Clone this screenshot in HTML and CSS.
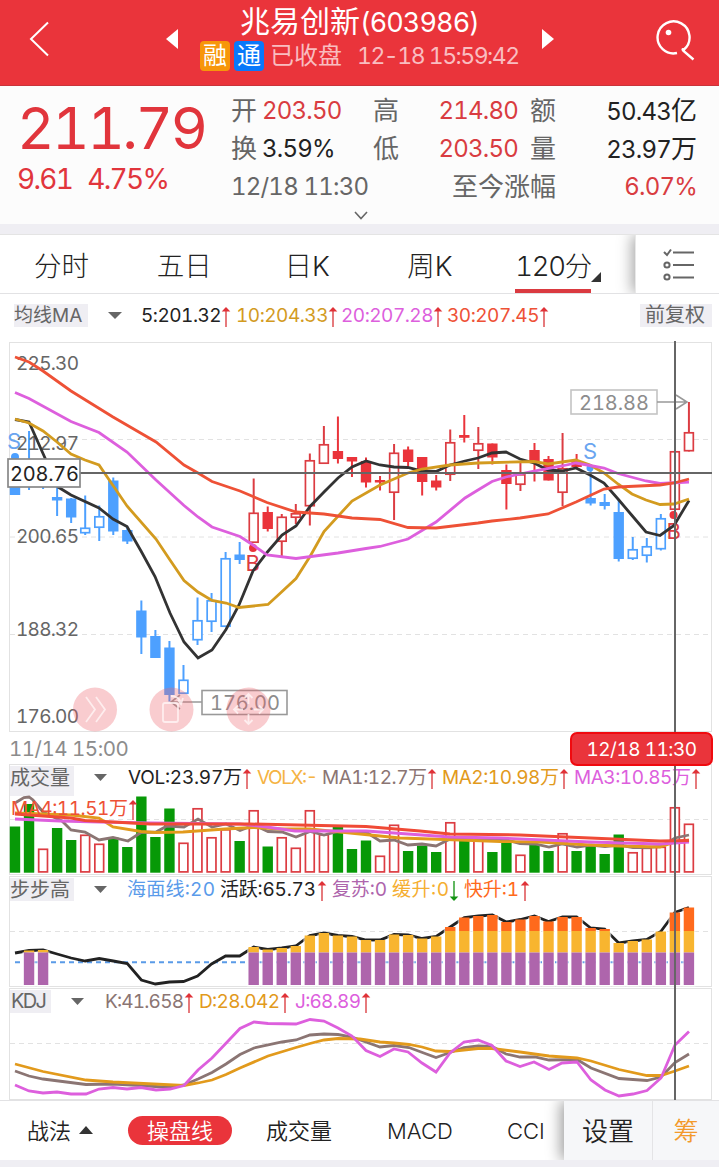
FILE: index.html
```html
<!DOCTYPE html>
<html lang="zh-CN">

<head>
    <meta charset="UTF-8">
    <meta name="viewport" content="width=device-width, initial-scale=1.0">
    <title>兆易创新(603986)</title>
    <link rel="stylesheet" href="styles.css">
</head>

<body>
    <svg class="defs" width="0" height="0">
        <symbol id="up" viewBox="0 0 10 20">
            <path d="M5 1V20" stroke="#e0595c" stroke-width="1.6" />
            <path d="M5 0L9.3 4.6H0.7Z" fill="#e03238" />
        </symbol>
        <symbol id="down" viewBox="0 0 10 20">
            <path d="M5 0V19" stroke="#3aa53a" stroke-width="1.6" />
            <path d="M5 20L9.3 15.4H0.7Z" fill="#129312" />
        </symbol>
    </svg>

    <!-- Header -->
    <header class="topbar">
        <svg class="back" width="60" height="78" viewBox="0 0 60 78"><path d="M48 22.500L31 39L48 55.500" /></svg>
        <svg class="prev" width="12" height="20" viewBox="0 0 12 20"><path d="M12 0V20L0 10Z" /></svg>
        <div class="stock">
            <div class="stock-name">兆易创新<span>(603986)</span></div>
            <div class="stock-info">
                <b class="tag tag-rong">融</b><b class="tag tag-tong">通</b>
                <span class="closed">已收盘</span><span class="time">12-18 15:59:42</span>
            </div>
        </div>
        <svg class="next" width="12" height="20" viewBox="0 0 12 20"><path d="M0 0V20L12 10Z" /></svg>
        <svg class="search" width="42" height="42" viewBox="0 0 42 42">
            <path d="M22 34A16 16 0 1 1 29 30.500Q26.500 29.500 28.500 32L38.500 40.500" />
            <circle cx="13.500" cy="13.500" r="2.800" />
        </svg>
    </header>

    <!-- Quote -->
    <section class="quote">
        <div class="price-box">
            <div class="price">211.79</div>
            <div class="change"><span>9.61</span><span>4.75%</span></div>
        </div>
        <div class="stats">
            <div class="stat-row">
                <i>开</i><span class="red">203.50</span><i>高</i><span class="red end">214.80</span><i class="last">额</i><span class="end">50.43<em>亿</em></span>
            </div>
            <div class="stat-row">
                <i>换</i><span>3.59%</span><i>低</i><span class="red end">203.50</span><i class="last">量</i><span class="end">23.97<em>万</em></span>
            </div>
            <div class="stat-range">
                <span class="when">12/18 11:30</span><i>至今涨幅</i><span class="red end">6.07%</span>
            </div>
        </div>
        <svg class="more" width="14" height="9" viewBox="0 0 14 9"><path d="M1 1L7 7.500L13 1" /></svg>
    </section>

    <!-- Period tabs -->
    <nav class="tabs">
        <div class="tab">分时</div>
        <div class="tab">五日</div>
        <div class="tab">日K</div>
        <div class="tab">周K</div>
        <div class="tab active"><span>120分</span></div>
        <div class="tab-menu">
            <svg width="34" height="34" viewBox="0 0 34 34">
                <path d="M2 4L5 7L9 1.500M11 4.500H32M11 17H32M11 29.500H32" />
                <circle cx="5" cy="17" r="2.600" /><circle cx="5" cy="29" r="2.600" />
            </svg>
        </div>
    </nav>

    <main class="charts">
        <div class="ma-row">
            <span class="chip">均线MA</span>
            <svg class="caret" width="14" height="7" viewBox="0 0 14 7"><path d="M0 0H14L7 7Z" /></svg>
            <span class="ma c5">5:201.32<svg><use href="#up" /></svg></span>
            <span class="ma c10">10:204.33<svg><use href="#up" /></svg></span>
            <span class="ma c20">20:207.28<svg><use href="#up" /></svg></span>
            <span class="ma c30">30:207.45<svg><use href="#up" /></svg></span>
            <span class="chip fq">前复权</span>
        </div>

        <!-- K line -->
        <svg class="panel" width="719" height="390" viewBox="0 342 719 390">
            <rect class="frame" x="9.500" y="342.500" width="702" height="389" />
            <path class="grid" d="M10 439.500H711M10 537H711M10 634.500H711" />
            <g id="candles"></g>
            <g class="axis">
                <text x="16" y="370" textLength="63">225.30</text>
                <text x="16" y="450" textLength="63">212.97</text>
                <text x="16" y="543" textLength="63">200.65</text>
                <text x="16" y="636" textLength="63">188.32</text>
                <text x="16" y="723" textLength="63">176.00</text>
            </g>
            <circle cx="15" cy="457" r="4" fill="#4da0ff" />
            <text class="sign sell" x="7" y="449">S</text>
            <circle cx="590" cy="468" r="3.500" fill="#4da0ff" />
            <text class="sign sell" x="583" y="459">S</text>
            <circle cx="253" cy="548" r="4" fill="#ea343b" />
            <text class="sign buy" x="245.500" y="571">B</text>
            <circle cx="673.500" cy="515" r="4" fill="#ea343b" />
            <text class="sign buy" x="666.500" y="538.500">B</text>
            <g id="ma"></g>
            <path d="M80 473H712" stroke="#666" stroke-width="2" />
            <rect x="8" y="459" width="72" height="28" fill="#fff" stroke="#888" stroke-width="1.700" />
            <text class="cursor-price" x="10" y="481" textLength="69">208.76</text>
            <g class="mark">
                <rect x="571" y="390" width="86" height="24" stroke="#c4c4c4" />
                <path d="M657 402H686M676 395L687 402L676 409" />
                <text x="579" y="410" textLength="70">218.88</text>
                <rect x="202" y="690.500" width="85" height="24" stroke="#999" />
                <path d="M202 702H171M180 695L171 702L180 709" />
                <text x="210" y="710" textLength="70">176.00</text>
            </g>
            <g class="round">
                <circle cx="95" cy="709.500" r="22" />
                <path d="M86 697L95 709.500L86 722M96 697L105 709.500L96 722" />
                <circle cx="171.500" cy="709.500" r="22" />
                <rect x="163" y="703" width="15" height="19" rx="2" />
                <path d="M171 696Q179 696 181 703M178 700L181 704L183 698" />
                <circle cx="248.500" cy="709.500" r="22" />
                <path d="M248.500 694V704M248.500 714V724M234 709.500H243M254 709.500H263M244.500 698L248.500 694L252.500 698M244.500 720L248.500 724L252.500 720M238 705.500L234 709.500L238 713.500M259 705.500L263 709.500L259 713.500" />
            </g>
        </svg>

        <div class="dates">
            <span>11/14 15:00</span>
            <span class="date-pill">12/18 11:30</span>
        </div>

        <!-- Volume -->
        <svg class="panel" width="719" height="112" viewBox="0 764 719 112">
            <rect class="frame" x="9.500" y="764.500" width="702" height="110" />
            <path class="grid" d="M10 819.500H711" />
            <rect class="chip-bg" x="10" y="766" width="64" height="30" />
            <text class="name" x="10" y="785" textLength="60">成交量</text>
            <path class="drop" d="M94 774H107L100.500 781Z" />
            <g id="volume"></g>
            <g id="volume-ma"></g>
            <g class="legend">
                <text x="128" y="784" textLength="114" fill="#222">VOL:23.97万</text>
                <use href="#up" x="242" y="769" width="10" height="20" />
                <text x="257" y="784" textLength="61" fill="#f5b343">VOLX:-</text>
                <text x="322" y="784" textLength="105" fill="#8b7573">MA1:12.7万</text>
                <use href="#up" x="427" y="769" width="10" height="20" />
                <text x="442" y="784" textLength="117" fill="#e29a1c">MA2:10.98万</text>
                <use href="#up" x="559" y="769" width="10" height="20" />
                <text x="574" y="784" textLength="117" fill="#dd5fdd">MA3:10.85万</text>
                <use href="#up" x="691" y="769" width="10" height="20" />
                <text x="11" y="815" textLength="117" fill="#ee5136">MA4:11.51万</text>
                <use href="#up" x="128" y="800" width="10" height="20" />
            </g>
        </svg>

        <!-- BBG -->
        <svg class="panel" width="719" height="112" viewBox="0 876 719 112">
            <rect class="frame" x="9.500" y="876.500" width="702" height="110" />
            <path class="grid" d="M10 931.500H711" />
            <rect class="chip-bg" x="10" y="878" width="64" height="23" />
            <text class="name" x="10" y="897" textLength="60">步步高</text>
            <path class="drop" d="M94 886H107L100.500 893Z" />
            <path d="M15 962.300H689" stroke="#5a9be8" stroke-width="2" stroke-dasharray="5 4" />
            <g id="bbg"></g>
            <g class="legend">
                <text x="127" y="896" textLength="88" fill="#5a9bea">海面线:20</text>
                <text x="220" y="896" textLength="96" fill="#222">活跃:65.73</text>
                <use href="#up" x="317" y="881" width="10" height="20" />
                <text x="332" y="896" textLength="55" fill="#ae65ac">复苏:0</text>
                <text x="392" y="896" textLength="57" fill="#f5ae30">缓升:0</text>
                <use href="#down" x="449" y="881" width="10" height="20" />
                <text x="464" y="896" textLength="55" fill="#ff6a1c">快升:1</text>
                <use href="#up" x="520" y="881" width="10" height="20" />
            </g>
        </svg>

        <!-- KDJ -->
        <svg class="panel" width="719" height="112" viewBox="0 988 719 112">
            <rect class="frame" x="9.500" y="988.500" width="702" height="111" />
            <path class="grid" d="M10 1043.500H711" />
            <rect class="chip-bg" x="10" y="990" width="41" height="23" />
            <text class="name" x="11" y="1008" textLength="36">KDJ</text>
            <path class="drop" d="M71 998H84L77.500 1005Z" />
            <g id="kdj"></g>
            <g class="legend">
                <text x="105" y="1008" textLength="79" fill="#8b7573">K:41.658</text>
                <use href="#up" x="184" y="993" width="10" height="20" />
                <text x="199" y="1008" textLength="81" fill="#e29a1c">D:28.042</text>
                <use href="#up" x="280" y="993" width="10" height="20" />
                <text x="295" y="1008" textLength="66" fill="#dd5fdd">J:68.89</text>
                <use href="#up" x="361" y="993" width="10" height="20" />
            </g>
        </svg>
        <div class="crosshair"></div>
    </main>

    <!-- Bottom bar -->
    <footer class="bottom">
        <div class="strategy">战法<svg width="14" height="8" viewBox="0 0 14 8"><path d="M0 8H14L7 0Z" /></svg></div>
        <div class="pill">操盘线</div>
        <div class="ind vol">成交量</div>
        <div class="ind macd">MACD</div>
        <div class="ind cci">CCI</div>
        <div class="setting">设置</div>
        <div class="chou">筹</div>
    </footer>
    <script src="chart.js"></script>
</body>

</html>
```
FILE: styles.css
```css
body {
    margin: 0;
    width: 719px;
    height: 1167px;
    overflow: hidden;
    background-color: #efeef3;
    font-family: Inter, "Noto Sans CJK SC", sans-serif;
    font-variant-numeric: tabular-nums;
    color: #222;
}

svg {
    display: block;
    flex: none;
}

.defs {
    position: absolute;
}

i,
em {
    font-style: normal;
}

/* Header */

.topbar {
    display: flex;
    box-sizing: border-box;
    height: 86px;
    background-color: #ea343b;
    border-bottom: 1px solid #c9343b;
    color: #fff;
}

.back {
    fill: none;
    stroke: #fff;
    stroke-width: 2;
}

.prev {
    margin: 29px 0 0 106px;
    fill: #fff;
}

.next {
    margin-top: 29px;
    fill: #fff;
}

.stock {
    width: 364px;
}

.stock-name {
    height: 42px;
    padding-left: 62px;
    font-size: 30px;
    line-height: 43px;
    white-space: nowrap;
}

.stock-name span {
    font-size: 27px;
    letter-spacing: -0.9px;
}

.stock-info {
    display: flex;
    height: 30px;
    margin-top: -1px;
    padding-left: 22px;
    line-height: 30px;
    font-size: 24px;
    white-space: nowrap;
}

.tag {
    width: 30px;
    height: 30px;
    margin-right: 4px;
    border-radius: 4px;
    font-size: 24px;
    font-weight: 400;
    text-align: center;
}

.tag-rong {
    background-color: #f7960a;
}

.tag-tong {
    background-color: #0a78fa;
}

.closed {
    margin: 0 15px 0 2px;
    color: #f9bdc0;
}

.time {
    font-size: 23px;
    letter-spacing: -1.5px;
    color: #f9bdc0;
}

.search {
    margin: 19px 0 0 101px;
    fill: none;
    stroke: #fff;
    stroke-width: 2.4;
}

.search circle {
    fill: #fff;
    stroke: none;
}

/* Quote */

.quote {
    position: relative;
    display: flex;
    height: 138px;
    background-color: #fcfcfc;
}

.price-box {
    width: 214px;
    padding-left: 17px;
    color: #e1353c;
}

.price {
    height: 76px;
    line-height: 84px;
    font-size: 58px;
    letter-spacing: -2.5px;
}

.change {
    display: flex;
    gap: 15px;
    line-height: 34px;
    font-size: 28px;
    letter-spacing: -1.7px;
}

.stats {
    width: 466px;
    padding-top: 6px;
    font-size: 24px;
    line-height: 38px;
    letter-spacing: -0.8px;
    white-space: nowrap;
}

.stat-row {
    display: grid;
    grid-template-columns: 31px 111px 40px 105px 38px 141px;
    height: 38px;
}

.stats i {
    font-size: 26px;
    letter-spacing: 0;
    color: #666;
}

.stats em {
    font-size: 26px;
    letter-spacing: 0;
}

.stats .last {
    padding-left: 12px;
}

.stat-range {
    display: flex;
    height: 38px;
}

.when {
    width: 221px;
    color: #666;
}

.end {
    flex: 1;
    text-align: right;
}

.red {
    color: #d93c41;
}

.more {
    position: absolute;
    left: 354px;
    top: 125px;
    fill: none;
    stroke: #666;
    stroke-width: 1.6;
}

/* Tabs */

.tabs {
    display: flex;
    box-sizing: border-box;
    height: 60px;
    margin-top: 10px;
    border-top: 1px solid #e4e4e4;
    border-bottom: 1px solid #e2e2e4;
    background-color: #fff;
    overflow: hidden;
    font-size: 27.5px;
    font-weight: 300;
    line-height: 62px;
}

.tab {
    width: 123px;
    text-align: center;
}

.active {
    position: relative;
    width: 144px;
    padding-left: 24px;
    box-sizing: border-box;
    text-align: left;
}

.active span {
    display: block;
    box-sizing: border-box;
    width: 76px;
    height: 58px;
    border-bottom: 4px solid #da3a40;
    white-space: nowrap;
    letter-spacing: -1.3px;
}

.active::after {
    content: "";
    position: absolute;
    left: 100px;
    top: 37px;
    border-left: 10px solid transparent;
    border-bottom: 10px solid #333;
}

.tab-menu {
    width: 83px;
    border-left: 1px solid #e8e8e8;
    background-color: #fff;
    box-shadow: -3px 0 14px rgba(0, 0, 0, 0.35);
}

.tab-menu svg {
    margin: 13px 0 0 26px;
    fill: none;
    stroke: #666;
    stroke-width: 2;
}

/* Charts */

.charts {
    position: relative;
    height: 806px;
    background-color: #fff;
}

.ma-row {
    display: flex;
    height: 48px;
    box-sizing: border-box;
    padding-top: 10px;
    font-size: 19px;
    line-height: 23px;
    white-space: nowrap;
}

.chip {
    box-sizing: border-box;
    width: 74px;
    height: 23px;
    margin-left: 14px;
    background-color: #efeef3;
    color: #666;
}

.chip.fq {
    width: 72px;
    margin-left: 87px;
    padding-left: 5px;
    font-size: 20px;
}

.caret {
    margin: 8px 0 0 20px;
    fill: #666;
}

.ma {
    display: flex;
    width: 106px;
    letter-spacing: -0.5px;
}

.ma svg {
    width: 10px;
    height: 20px;
    margin-top: 3px;
}

.c5 {
    width: 95px;
    margin-left: 19px;
}

.c10 {
    width: 105px;
    color: #d39b1f;
}

.c20 {
    color: #dd5fdd;
}

.c30 {
    color: #ee5136;
}

.frame {
    fill: none;
    stroke: #e2e2e2;
}

.grid {
    stroke: #e2e2e2;
    stroke-dasharray: 5 4;
}

.axis {
    font-size: 19px;
    fill: #666;
}

.sell {
    fill: #6aa5f0;
    font-size: 22px;
}

.buy {
    fill: #dc3c42;
    font-size: 22px;
}

.cursor-price {
    font-size: 20px;
    fill: #222;
}

.mark {
    fill: none;
    stroke: #999;
    stroke-width: 1.6;
}

.mark text {
    fill: #8c8c8c;
    stroke: none;
    font-size: 20px;
}

.round circle {
    fill: rgba(237, 100, 108, 0.33);
}

.round path,
.round rect {
    fill: none;
    stroke: rgba(255, 245, 245, 0.8);
    stroke-width: 1.8;
}

.dates {
    display: flex;
    justify-content: space-between;
    height: 32px;
    padding-left: 9px;
    padding-right: 6px;
    font-size: 20.5px;
    line-height: 34px;
    letter-spacing: -0.5px;
    color: #8c8c8c;
}

.date-pill {
    position: relative;
    z-index: 2;
    box-sizing: border-box;
    width: 143px;
    height: 34px;
    border: 2px solid #f00a0f;
    border-radius: 7px;
    background-color: #ea343b;
    line-height: 31px;
    text-align: center;
    font-size: 19px;
    color: #fff;
}

.chip-bg {
    fill: #efeef3;
}

.name {
    font-size: 20px;
    fill: #666;
}

.drop {
    fill: #666;
}

.legend {
    font-size: 19px;
}

.crosshair {
    position: absolute;
    left: 674px;
    top: 47px;
    width: 2px;
    height: 759px;
    background-color: #666;
}

/* Bottom bar */

.bottom {
    display: flex;
    box-sizing: border-box;
    height: 60px;
    border-top: 1px solid #e2e2e4;
    background-color: #fff;
    overflow: hidden;
    font-size: 22px;
    font-weight: 350;
    line-height: 61px;
    white-space: nowrap;
}

.strategy {
    display: flex;
    width: 101px;
    padding-left: 27px;
}

.strategy svg {
    margin: 25px 0 0 8px;
    fill: #333;
}

.pill {
    width: 104px;
    height: 29px;
    margin-top: 15px;
    border-radius: 15px;
    background-color: #ea343b;
    line-height: 30px;
    text-align: center;
    color: #fff;
}

.vol {
    width: 121px;
    padding-left: 34px;
}

.macd {
    width: 120px;
}

.cci {
    width: 38px;
    margin-right: 19px;
}

.setting {
    width: 88px;
    background-color: #f6f7f9;
    box-shadow: -3px 0 14px rgba(0, 0, 0, 0.4);
    text-align: center;
    font-size: 26px;
}

.chou {
    flex: 1;
    border-left: 1px solid #e4e4e6;
    background-color: #f6f7f9;
    text-align: center;
    font-size: 25px;
    color: #f39a2b;
}
```
FILE: chart.js
```js
const NS = 'http://www.w3.org/2000/svg';
const STEP = 14.04;
const BAR = 10.4;
const RED = '#dc3c42';
const BLUE = '#4da0ff';

function add(parent, tag, attrs) {
    const el = document.createElementNS(NS, tag);
    for (const key in attrs) el.setAttribute(key, attrs[key]);
    document.getElementById(parent).appendChild(el);
}

function line(parent, points, color, width) {
    add(parent, 'polyline', {
        points: points,
        fill: 'none',
        stroke: color,
        'stroke-width': width || 2.8
    });
}

function centre(i) {
    return 15 + i * STEP;
}

function bar(parent, i, top, bottom, color, hollow) {
    const inset = hollow ? 0.8 : 0;
    add(parent, 'rect', {
        x: centre(i) - BAR / 2 + inset,
        y: top + inset,
        width: BAR - inset * 2,
        height: bottom - top - inset * 2,
        fill: hollow ? '#fff' : color,
        stroke: hollow ? color : 'none',
        'stroke-width': 1.7
    });
}

// high, body top, body bottom, low, 1 = hollow
const candles = [
    [460, 470, 495, 495, 0], [431, 468, 480, 490, 0], [462, 475, 482, 489, 0], [486, 497, 500.5, 516, 0],
    [498, 498.5, 517.5, 523, 0], [495.5, 527.5, 533.5, 535, 1], [505.5, 516, 528, 541, 1], [477.5, 480.5, 531.5, 535, 0],
    [526.5, 530, 541.5, 544, 0], [600.5, 610.5, 637.5, 654, 0], [630, 636, 658, 658, 0], [641, 647.5, 695, 701.5, 0],
    [665, 679.5, 694, 694, 1], [597.5, 620, 640.5, 645, 1], [593, 600, 622, 632, 1], [552, 558, 627, 627, 1],
    [542, 554.5, 560, 564, 0], [478.5, 512.5, 543, 543, 1], [506.5, 512, 529, 531.5, 0], [514, 516.5, 542, 556.5, 1],
    [504, 513, 518, 524, 1], [453.5, 460, 506.5, 525.5, 1], [426, 444, 464, 464, 1], [416.5, 451, 459, 463.5, 0],
    [457, 457, 461.5, 477, 0], [457.5, 461, 482.5, 487.5, 0], [476, 480, 482.5, 490.5, 0], [444, 452.5, 493, 520, 1],
    [446.5, 449.5, 462, 466, 0], [457, 457, 482, 495.5, 0], [475, 480.5, 487.5, 490.5, 0], [429.5, 442, 475, 481, 1],
    [415, 435, 437.8, 442.5, 0], [427, 443, 451, 469, 1], [443.5, 443.5, 457.5, 464.5, 0], [464.5, 470, 484, 509.5, 0],
    [461.5, 474, 485, 491, 1], [443, 450, 461, 481.5, 0], [456, 459, 480.5, 480.5, 0], [433, 468, 493, 506, 1],
    [454, 461, 467, 469, 0], [470, 498, 503.5, 505.5, 0], [494, 502, 506, 509.5, 0], [500, 512, 559, 561.5, 0],
    [537, 549, 559, 560, 1], [538, 546, 556, 562.5, 1], [514, 518, 549.5, 550.5, 1], [451, 451, 510, 510, 1],
    [402, 432, 451.5, 451.5, 1]
];

candles.forEach(function (c, i) {
    const color = i < 17 || (i > 40 && i < 47) ? BLUE : (c[4] ? RED : '#ea343b');
    add('candles', 'path', {
        d: `M${centre(i)} ${c[0]}V${c[3]}`,
        stroke: color,
        'stroke-width': 2
    });
    bar('candles', i, c[1], c[2], color, c[4]);
});

line('ma', '15,419.500 29,422 45,458 58,487 71,495 99,508 113,519 127,526.500 141,551 155,576.500 170,613 184,642 198,658 212,650 226,629.500 239,605 253,571 267,552.500 282,535 296,526 310,506.500 324,492 338,478 352,467 366,461 380,465 394,467 408,467.500 422,471 436,471.500 450,465 465,461 478,458 492,453 506,452 520,459 534,463 548,470 562,471 576,468 590,475 604,483 618,499 632,515.500 646,532 660,535.500 674,525.500 689,500.500', '#333');
line('ma', '15,419 29,423 43,431 57,442 71,454 85,460 99,465 113,485.500 127,506 156,539 170,560 184,580.500 198,592 212,600.500 226,603 239,607.500 268,604.500 281,592.500 296,578.500 310,556.500 324,531.500 352,501 380,485 408,473 422,469 450,465 478,463 534,461.500 548,464 576,460 590,465 604,473 618,484 632,494 646,500 660,504.500 674,504 689,499', '#d39b1f');
line('ma', '15,392.500 29,398.500 71,421.500 99,432.500 127,452 156,480 184,505.500 198,517 212,527 240,536.500 253,545 267,555 296,558.500 338,553 366,548.500 380,546.500 408,539 436,522 465,498 478,490 492,481.500 506,477 534,471 562,466 576,463 590,465.500 604,468 618,473.500 646,481 660,483.500 689,482', '#dd5fdd');
line('ma', '15,357 29,362 43,371 71,391 113,417 156,442 184,465 198,473 212,481.500 240,491 267,502.500 296,512 324,514 352,518 380,519.500 408,527.500 436,528 478,523 492,521 520,518 548,514 576,502 604,489 618,487 660,485 674,483 689,479', '#ee5136');

// top of each volume bar, r = up, g = down
const volume = [
    '826.5g', '804g', '848.5r', '828g', '840g', '834.5r', '843.5r', '837.5g', '847g', '796.5g', '837g', '808.5g', '842.5r',
    '808r', '837r', '829r', '841g', '810r', '846.5g', '837r', '847.5r', '810r', '834r', '827g', '849g', '840.5g', '855.5r',
    '824.5r', '851g', '845.5g', '852g', '822r', '836.5g', '839r', '852g', '843g', '854.5r', '845g', '851g', '833r',
    '851g', '845.5g', '854g', '834.5g', '852r', '847.5r', '846.5r', '807r', '823.5r'
];

volume.forEach(function (v, i) {
    const up = v.endsWith('r');
    bar('volume', i, parseFloat(v), 872.7, up ? RED : '#079907', up);
});

line('volume-ma', '15,803 24,797.500 29,797 33,800 43,812 62,821 71,830 85,832 99,840 113,837.500 128,841 141,832.500 156,832 167,826 184,827 198,819 212,827 226,824 240,830.500 254,825 268,831.500 282,832 296,837 310,831.500 324,835 338,831.500 366,832 380,841 394,840 408,845 422,844 436,846 450,839 464,838 478,839 507,840 520,843.500 535,844 549,847 562,844 577,847 591,845 605,846.500 619,845 633,847.500 647,847.500 661,846.500 675,838 689,835', '#8b7573');
line('volume-ma', '15,813 43,814 71,815 99,818 113,827 141,831.500 155,832.500 183,832 225,829 253,827.500 281,829 310,829 360,834 400,838 460,840 500,841.500 540,842 590,845 620,846 660,847 675,842 689,840', '#e29a1c');
line('volume-ma', '15,819 60,821 100,822 150,823 240,824 267,827 295,831 366,831 450,837 500,838 590,842 660,844 689,842', '#dd5fdd');
line('volume-ma', '15,814 71,818 85,820.500 113,822 150,824 250,824 366,826.500 420,831 450,834 520,835 590,838 660,841 689,840.500', '#f04a36', 3);

// activity line, bars are shown where it is strong
const active = [
    953, 950.5, 950, 954, 958, 961, 958.5, 961, 963.5, 980, 984, 982, 981.5, 976, 964, 956, 956,
    947, 949.5, 948, 946, 935.5, 933, 935.5, 936.5, 940, 940, 934.5, 935, 938.5, 936.5, 927, 917.5,
    916, 915, 922, 919.5, 916, 921.5, 917, 917, 928, 929, 943, 941, 939.5, 931.5, 912.5, 907.5
];

line('bbg', active.map((y, i) => `${centre(i)},${y}`).join(' '), '#222');
active.forEach(function (y, i) {
    if (i === 0 || (i > 2 && i < 17)) return;
    add('bbg', 'rect', { x: centre(i) - 6.5, y: y + 1.5, width: 13, height: 985 - y, fill: '#fff', opacity: 0.6 });
    if (y < 931) bar('bbg', i, y, 931, '#ff6a1c');
    bar('bbg', i, Math.max(y, 931), 952.5, '#f8b52f');
    bar('bbg', i, 952.5, 985, '#ae65ac');
});

line('kdj', '15,1071 29,1076 43,1079 86,1084.500 113,1084 141,1085.500 170,1087.500 184,1085 198,1079 212,1072.500 226,1064 240,1054.500 254,1048 282,1042 296,1040 310,1035 324,1034 338,1034.500 352,1037 380,1047 394,1045.500 409,1047.500 436,1057.500 450,1052.500 464,1047.500 478,1046 492,1046.500 506,1054 520,1057 535,1057 549,1060 577,1059.500 591,1068 619,1078.500 647,1080.500 661,1077 675,1062.500 689,1054', '#8b7573');
line('kdj', '15,1064 43,1071.500 86,1080 113,1082 184,1085.500 198,1083 212,1080 226,1074.500 240,1068 268,1056 296,1047.500 310,1043.500 324,1040 338,1038.500 360,1039 380,1042 394,1043 409,1044.500 422,1047 436,1051 450,1051.500 478,1048.500 492,1048.500 520,1052 549,1056 577,1058 591,1061 619,1069.500 647,1075.500 661,1075.500 675,1071 689,1066', '#e29a1c');
line('kdj', '15,1085 29,1091 43,1093 57,1092 71,1094 86,1094 99,1089 113,1087.500 127,1089 141,1087.500 156,1090 170,1089 184,1085.500 198,1070 212,1058 240,1028.500 254,1022 268,1023.500 296,1024 310,1019.500 324,1021 338,1028 352,1036 366,1050.500 380,1056.500 394,1049 408,1052 422,1063 436,1072 450,1053 464,1042 478,1040 492,1045.500 506,1061 520,1066.500 534,1062 549,1069.500 562,1063 577,1062 591,1080 605,1090 619,1096 633,1094 647,1090.500 661,1078 675,1045 689,1031.500', '#dd5fdd');
```
